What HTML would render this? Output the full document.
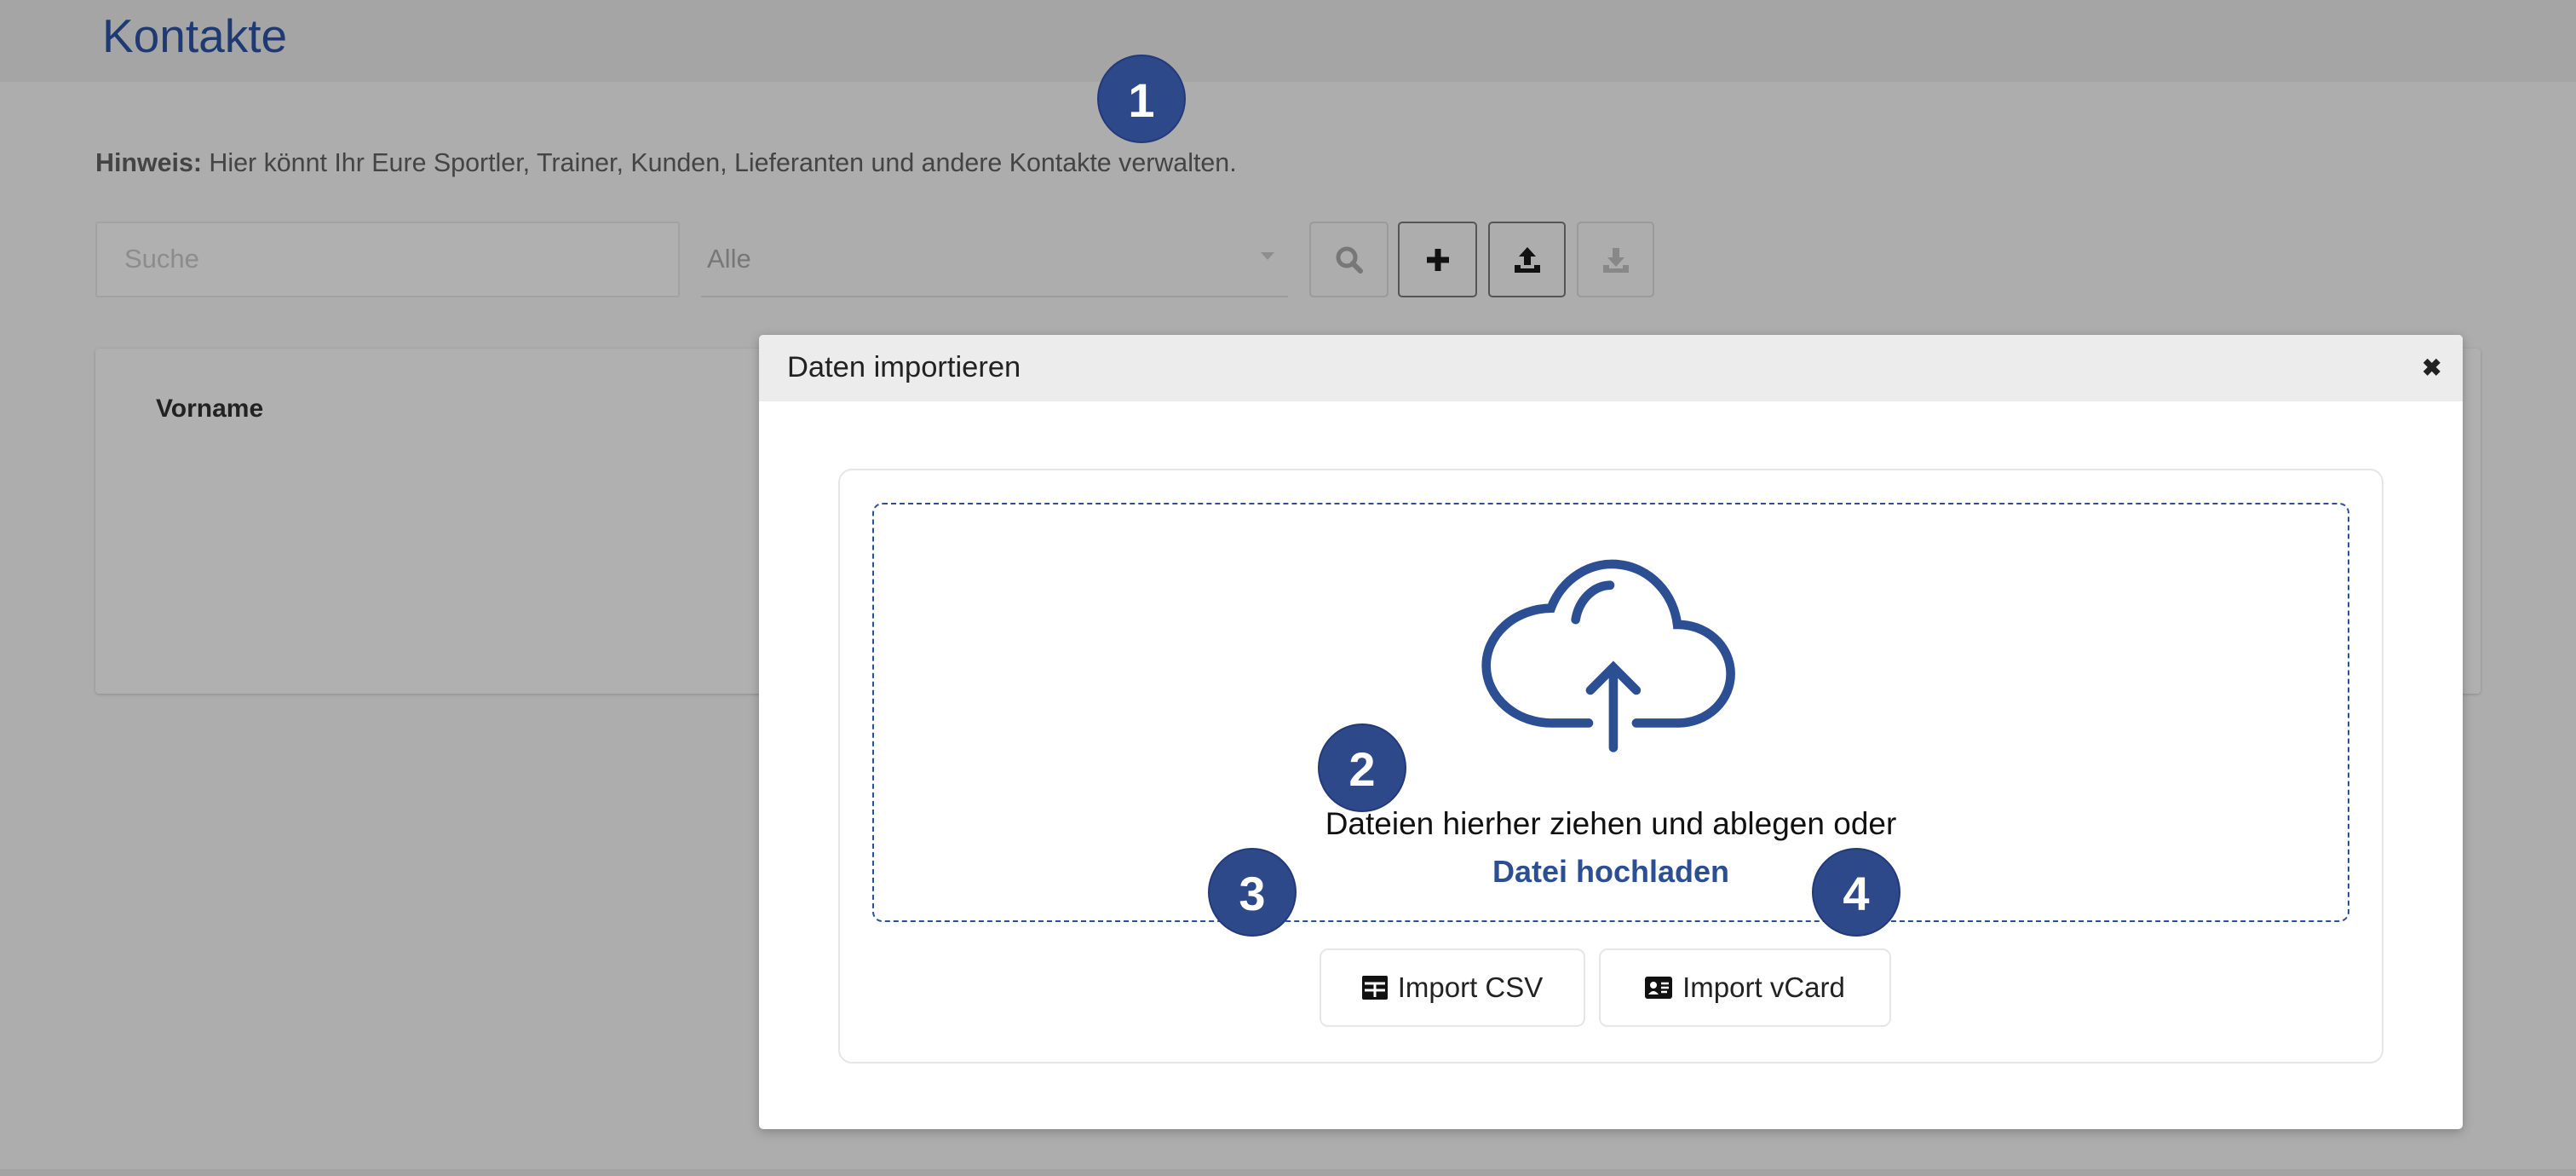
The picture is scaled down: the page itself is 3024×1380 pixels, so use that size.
<!DOCTYPE html>
<html><head><meta charset="utf-8"><style>
*{margin:0;padding:0;box-sizing:border-box}
body{width:3024px;height:1380px;position:relative;background:#adadad;font-family:"Liberation Sans",sans-serif;overflow:hidden}
.abs{position:absolute}
.hdr{left:0;top:0;width:3024px;height:96px;background:#a5a5a5}
.badge{position:absolute;width:104px;height:104px;border-radius:50%;background:#2d4989;color:#fff;font-weight:bold;font-size:56px;text-align:center;line-height:104px;border:2px solid #23397a}
.btn{position:absolute;top:260px;height:89px;border:2px solid #8f8f8f;border-radius:5px;background:#adadad;display:flex;align-items:center;justify-content:center}
</style></head><body>
<div class="abs hdr"></div>
<div class="abs" style="left:120px;top:10px;font-size:55px;color:#1f3a72">Kontakte</div>
<div class="abs" style="left:112px;top:174px;font-size:30.4px;color:#444"><b>Hinweis:</b> Hier könnt Ihr Eure Sportler, Trainer, Kunden, Lieferanten und andere Kontakte verwalten.</div>
<div class="abs" style="left:112px;top:260px;width:686px;height:89px;border:2px solid #a2a2a2;border-radius:3px;background:#b0b0b0"></div>
<div class="abs" style="left:146px;top:286px;font-size:31px;color:#8c8c8c">Suche</div>
<div class="abs" style="left:823px;top:260px;width:689px;height:89px;border-bottom:2px solid #9c9c9c"></div>
<div class="abs" style="left:830px;top:286px;font-size:31px;color:#777">Alle</div>
<div class="abs" style="left:1480px;top:296px;border-left:8px solid transparent;border-right:8px solid transparent;border-top:9px solid #8e8e8e"></div>
<div class="btn" style="left:1537px;width:93px;border-color:#9a9a9a"><svg width="36" height="36" viewBox="0 0 36 36"><circle cx="15" cy="15" r="10" fill="none" stroke="#777" stroke-width="5"/><path d="M22 22L31 31" stroke="#777" stroke-width="6" stroke-linecap="round"/></svg></div>
<div class="btn" style="left:1641px;width:93px;border-color:#555"><svg width="32" height="32" viewBox="0 0 32 32"><path d="M16 3V29M3 16H29" stroke="#111" stroke-width="7"/></svg></div>
<div class="btn" style="left:1747px;width:91px;border-color:#555"><svg width="36" height="36" viewBox="0 0 36 36"><path d="M18 3L8 14H14V24H22V14H28Z" fill="#111"/><path d="M3 24V33H33V24H26V28H10V24Z" fill="#111"/></svg></div>
<div class="btn" style="left:1851px;width:91px;border-color:#9a9a9a"><svg width="36" height="36" viewBox="0 0 36 36"><path d="M18 26L8 15H14V4H22V15H28Z" fill="#888"/><path d="M3 24V33H33V24H26V28H10V24Z" fill="#888"/></svg></div>
<div class="abs" style="left:112px;top:409px;width:2800px;height:405px;background:#b0b0b0;border-radius:4px;box-shadow:0 1px 3px rgba(0,0,0,.2)"></div>
<div class="abs" style="left:183px;top:463px;font-size:30px;font-weight:bold;color:#222">Vorname</div>
<div class="abs" style="left:0;top:1372px;width:3024px;height:8px;background:#a3a3a3"></div>

<div class="abs" style="left:891px;top:393px;width:2000px;height:932px;background:#fff;border-radius:5px;box-shadow:0 3px 12px rgba(0,0,0,.25);overflow:hidden">
  <div style="height:78px;background:#ececec;position:relative">
    <div class="abs" style="left:33px;top:19px;font-size:34.5px;color:#222">Daten importieren</div>
    <div class="abs" style="left:1952px;top:22px;font-size:28px;font-weight:bold;color:#222">✖</div>
  </div>
</div>
<div class="abs" style="left:984px;top:550px;width:1814px;height:698px;border:2px solid #e6e6e6;border-radius:16px"></div>
<div class="abs" style="left:1024px;top:590px;width:1734px;height:492px;border:2px dashed #2d4f99;border-radius:12px"></div>
<svg class="abs" style="left:1736px;top:627px" width="312" height="260" viewBox="900 325 162 135">
<g fill="none" stroke="#2c4f94" stroke-width="5.5" stroke-linecap="round">
<path d="M967 440H945A40 35 0 0 1 944 370A40 42 0 0 1 1021 380A32 30 0 0 1 1022 440H996"/>
<path d="M959 377A22 26 0 0 1 980 356"/>
<path d="M982 455V406M968 420L982 406L996 420"/>
</g></svg>
<div class="abs" style="left:1024px;top:946px;width:1734px;text-align:center;font-size:37px;color:#111">Dateien hierher ziehen und ablegen oder</div>
<div class="abs" style="left:1024px;top:1002px;width:1734px;text-align:center;font-size:36px;font-weight:bold;color:#2c4f94">Datei hochladen</div>
<div class="abs" style="left:1549px;top:1113px;width:312px;height:92px;border:2px solid #e6e6e6;border-radius:10px;display:flex;align-items:center;justify-content:center;font-size:33px;color:#222"><svg width="30" height="28" viewBox="0 0 30 28" style="margin-right:12px"><rect width="30" height="28" rx="2" fill="#111"/><path d="M3 9H27M15 9V25M3 17H27" stroke="#fff" stroke-width="3"/></svg>Import CSV</div>
<div class="abs" style="left:1877px;top:1113px;width:343px;height:92px;border:2px solid #e6e6e6;border-radius:10px;display:flex;align-items:center;justify-content:center;font-size:33px;color:#222"><svg width="32" height="26" viewBox="0 0 32 26" style="margin-right:12px"><rect width="32" height="26" rx="3" fill="#111"/><circle cx="10" cy="10" r="4" fill="#fff"/><path d="M4 21Q10 13 16 21Z" fill="#fff"/><path d="M19 8H28M19 13H28M19 18H26" stroke="#fff" stroke-width="2.5"/></svg>Import vCard</div>

<div class="badge" style="left:1288px;top:64px">1</div>
<div class="badge" style="left:1547px;top:849px">2</div>
<div class="badge" style="left:1418px;top:995px">3</div>
<div class="badge" style="left:2127px;top:995px">4</div>
</body></html>
